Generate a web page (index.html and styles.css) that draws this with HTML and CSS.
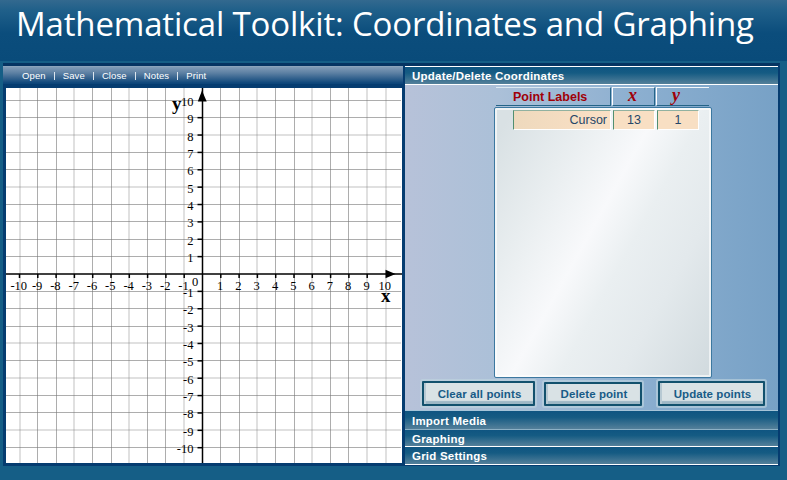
FILE: index.html
```html
<!DOCTYPE html>
<html lang="en">
<head>
<meta charset="utf-8">
<title>Mathematical Toolkit: Coordinates and Graphing</title>
<link rel="stylesheet" href="styles.css">
</head>
<body>
<header class="banner"><h1 class="title">Mathematical Toolkit: Coordinates and Graphing</h1></header>
<main class="frame">
  <section class="workspace">
    <nav class="toolbar">
      <span>Open</span><i></i><span>Save</span><i></i><span>Close</span><i></i><span>Notes</span><i></i><span>Print</span>
    </nav>
    <svg class="graph" id="graph" viewBox="6 88 396 375" width="396" height="375"></svg>
  </section>
  <aside class="panel">
    <h2 class="bar bar-top">Update/Delete Coordinates</h2>
    <div class="content">
      <div class="head">
        <div class="head-label">Point Labels</div>
        <div class="head-x">x</div>
        <div class="head-y">y</div>
      </div>
      <div class="list">
        <div class="row">
          <div class="cell cell-label">Cursor</div>
          <div class="cell">13</div>
          <div class="cell">1</div>
        </div>
      </div>
      <div class="actions">
        <button class="btn btn-clear">Clear all points</button>
        <button class="btn btn-delete">Delete point</button>
        <button class="btn btn-update">Update points</button>
      </div>
    </div>
    <h2 class="bar bar-import">Import Media</h2>
    <h2 class="bar bar-graphing">Graphing</h2>
    <h2 class="bar bar-grid">Grid Settings</h2>
  </aside>
</main>
<script src="graph.js"></script>
</body>
</html>
```
FILE: styles.css
```css
* { box-sizing: border-box; }
body {
  margin: 0;
  width: 787px;
  height: 480px;
  overflow: hidden;
  background: #155e86;
  font-family: "Liberation Sans", Arial, sans-serif;
}
.banner {
  height: 61px;
  background: linear-gradient(#33698f 0, #20608a 10px, #0b4d7c 33px, #094b7a 100%);
}
.title {
  margin: 0;
  padding: 2px 0 0 16px;
  font: 400 33px/44px "Open Sans", "Noto Sans", sans-serif;
  letter-spacing: -0.16px;
  color: #fff;
  white-space: nowrap;
}
.frame {
  display: flex;
  width: 777px;
  height: 403px;
  margin: 2px 0 0 3px;
  border-top: 3px solid #053462;
  border-right: 2px solid #053c70;
  border-bottom: 1px solid #053c70;
  background: #053c70;
}
.workspace { width: 400px; padding-bottom: 2px; }
.toolbar {
  display: flex;
  align-items: center;
  height: 18px;
  padding-left: 19px;
  background: linear-gradient(#819cb7, #5d80a3 35%, #0d467a 95%);
  border-top: 1px solid #8ba4bc;
  color: #fff;
  font-size: 9.5px;
  letter-spacing: 0.12px;
}
.toolbar i { width: 1px; height: 8px; background: #dbe5ee; margin: 0 8px; }
.graph { display: block; margin: 4px 0 0 3px; background: #fff; }
.grid-line { stroke: #777; stroke-width: 1; opacity: .6; }
.grid-line.soft { stroke-width: 2; opacity: .22; }
.axis { stroke: #000; stroke-width: 1.5; }
.num { font: 12.5px "Liberation Serif", serif; fill: #000; }
.axis-name { font: bold 19px "Liberation Serif", serif; }
.panel {
  display: flex;
  flex-direction: column;
  width: 373px;
  margin-left: 2px;
}
.bar {
  margin: 0;
  padding-left: 7px;
  background: linear-gradient(#0f5581, #155b83 35%, #54809a);
  color: #fff;
  font-size: 11.5px;
  letter-spacing: 0.22px;
  line-height: 17px;
  border-bottom: 1px solid #fff;
}
.bar-top { height: 19px; border-top: 1px solid #fff; line-height: 18px; }
.bar-import { height: 20px; border-bottom-color: #8bb0c5; border-top: 1px solid #a5c4d8; line-height: 20px; }
.bar-graphing { height: 17px; line-height: 18px; }
.bar-grid { height: 18px; line-height: 19px; }
.content {
  height: 325px;
  padding-top: 2px;
  background: linear-gradient(90deg, #b7c2d9, #abc0d8 25%, #8cafd0 62%, #77a1c6);
}
.head {
  display: grid;
  grid-template-columns: 115px 43px 53px;
  column-gap: 1px;
  height: 20px;
  margin-left: 91px;
  color: #a00008;
  font-weight: bold;
  line-height: 18px;
}
.head-label {
  height: 19px;
  padding-left: 17px;
  font-size: 12.5px;
  border-top: 1px solid #dce9f2;
  border-right: 1px solid #246487;
  border-bottom: 1px solid #246487;
}
.head-x, .head-y {
  height: 19px;
  font: italic bold 18px/14px "Liberation Serif", serif;
  border-top: 1px solid #f2f7fa;
  border-left: 1px solid #fff;
  border-bottom: 1px solid #246487;
  padding-left: 15px;
}
.head-x { border-right: 1px solid #246487; }
.list {
  width: 218px;
  height: 271px;
  margin-left: 89px;
  padding: 2px 0 0 17px;
  border: 1px solid #3c78a0;
  border-radius: 2px;
  box-shadow: inset 0 0 0 2px rgba(255,255,255,.6);
  background: linear-gradient(119deg, #d9e1e4 5%, #e8edef 25%, #f8f9fb 45%, #eaeff1 58%, #e3e9ec 75%, #d2dbdf 98%);
}
.row { display: grid; grid-template-columns: 98px 42px 42px; column-gap: 2px; height: 19px; margin-left: 1px; }
.cell {
  background: #f8dfc3;
  border: 1px solid #fff;
  border-top-color: #91b1a0;
  border-left-color: #518f70;
  color: #264668;
  font-size: 12.5px;
  line-height: 18px;
  text-align: center;
}
.cell-label { padding-right: 3px; text-align: right; background: linear-gradient(90deg, #eed9bd, #fbe0c5); }
.actions { display: flex; align-items: flex-start; padding: 3px 0 0 17px; }
.btn {
  height: 25px;
  padding: 0 0 0 2px;
  border: 2px solid #12516d;
  background: #d9e2e5;
  box-shadow: 0 0 0 2px rgba(192,213,224,.6), inset 2px 0 0 #b7c9d3, inset 0 -3px 1px #9db7c5;
  border-radius: 1px;
  font: bold 11.5px/20px "Liberation Sans", Arial, sans-serif;
  color: #185b87;
  letter-spacing: 0.08px;
  white-space: nowrap;
}
.btn-clear { width: 113px; }
.btn-delete { width: 98px; height: 24px; margin: 1px 0 0 9px; }
.btn-update { width: 107px; margin-left: 16px; }
```
FILE: graph.js
```js
const svg = document.getElementById('graph');
const OX = 202.5, OY = 274, SX = 18.3, SY = 17.37;
function add(tag, attrs, text) {
  const el = document.createElementNS('http://www.w3.org/2000/svg', tag);
  for (const k in attrs) el.setAttribute(k, attrs[k]);
  if (text !== undefined) el.textContent = text;
  svg.appendChild(el);
}
const softX = [-10, -7, -4, -1, 3, 6, 9, 10];
const softY = [8, 5, -4, -6, -9];
function gridLine(vertical, pos, soft) {
  const v = soft ? Math.round(pos) : Math.floor(pos) + 0.5;
  const span = vertical ? { x1: v, x2: v, y1: 88, y2: 463 } : { x1: 6, x2: 401, y1: v, y2: v };
  add('line', { class: soft ? 'grid-line soft' : 'grid-line', ...span });
}
for (let i = -10; i <= 10; i++) {
  if (i === 0) continue;
  gridLine(true, OX + i * SX, softX.includes(i));
  gridLine(false, OY - i * SY, softY.includes(i));
}
add('line', { class: 'axis', x1: OX, x2: OX, y1: 88, y2: 463 });
add('line', { class: 'axis', x1: 6, x2: 402, y1: OY, y2: OY });
for (let i = -10; i <= 10; i++) {
  if (i === 0) continue;
  const x = OX + i * SX, y = OY - i * SY;
  if (i < 10) {
    add('line', { class: 'axis', x1: x, x2: x, y1: OY, y2: OY + 4 });
    add('line', { class: 'axis', x1: OX - 5, x2: OX, y1: y, y2: y });
  }
  add('text', { class: 'num', x: x - 0.7, y: 290, 'text-anchor': 'middle' }, i);
  add('text', { class: 'num', x: 193.5, y: y + 5.5, 'text-anchor': 'end' }, i);
}
add('path', { d: 'M202 90.5L206.7 101.5H197.8Z' });
add('path', { d: 'M395.5 274L385.5 269.7V278.3Z' });
add('text', { class: 'num', x: 192, y: 286 }, '0');
add('text', { class: 'axis-name', x: 172, y: 109.5 }, 'y');
add('text', { class: 'axis-name', x: 381, y: 301.5 }, 'x');
```
